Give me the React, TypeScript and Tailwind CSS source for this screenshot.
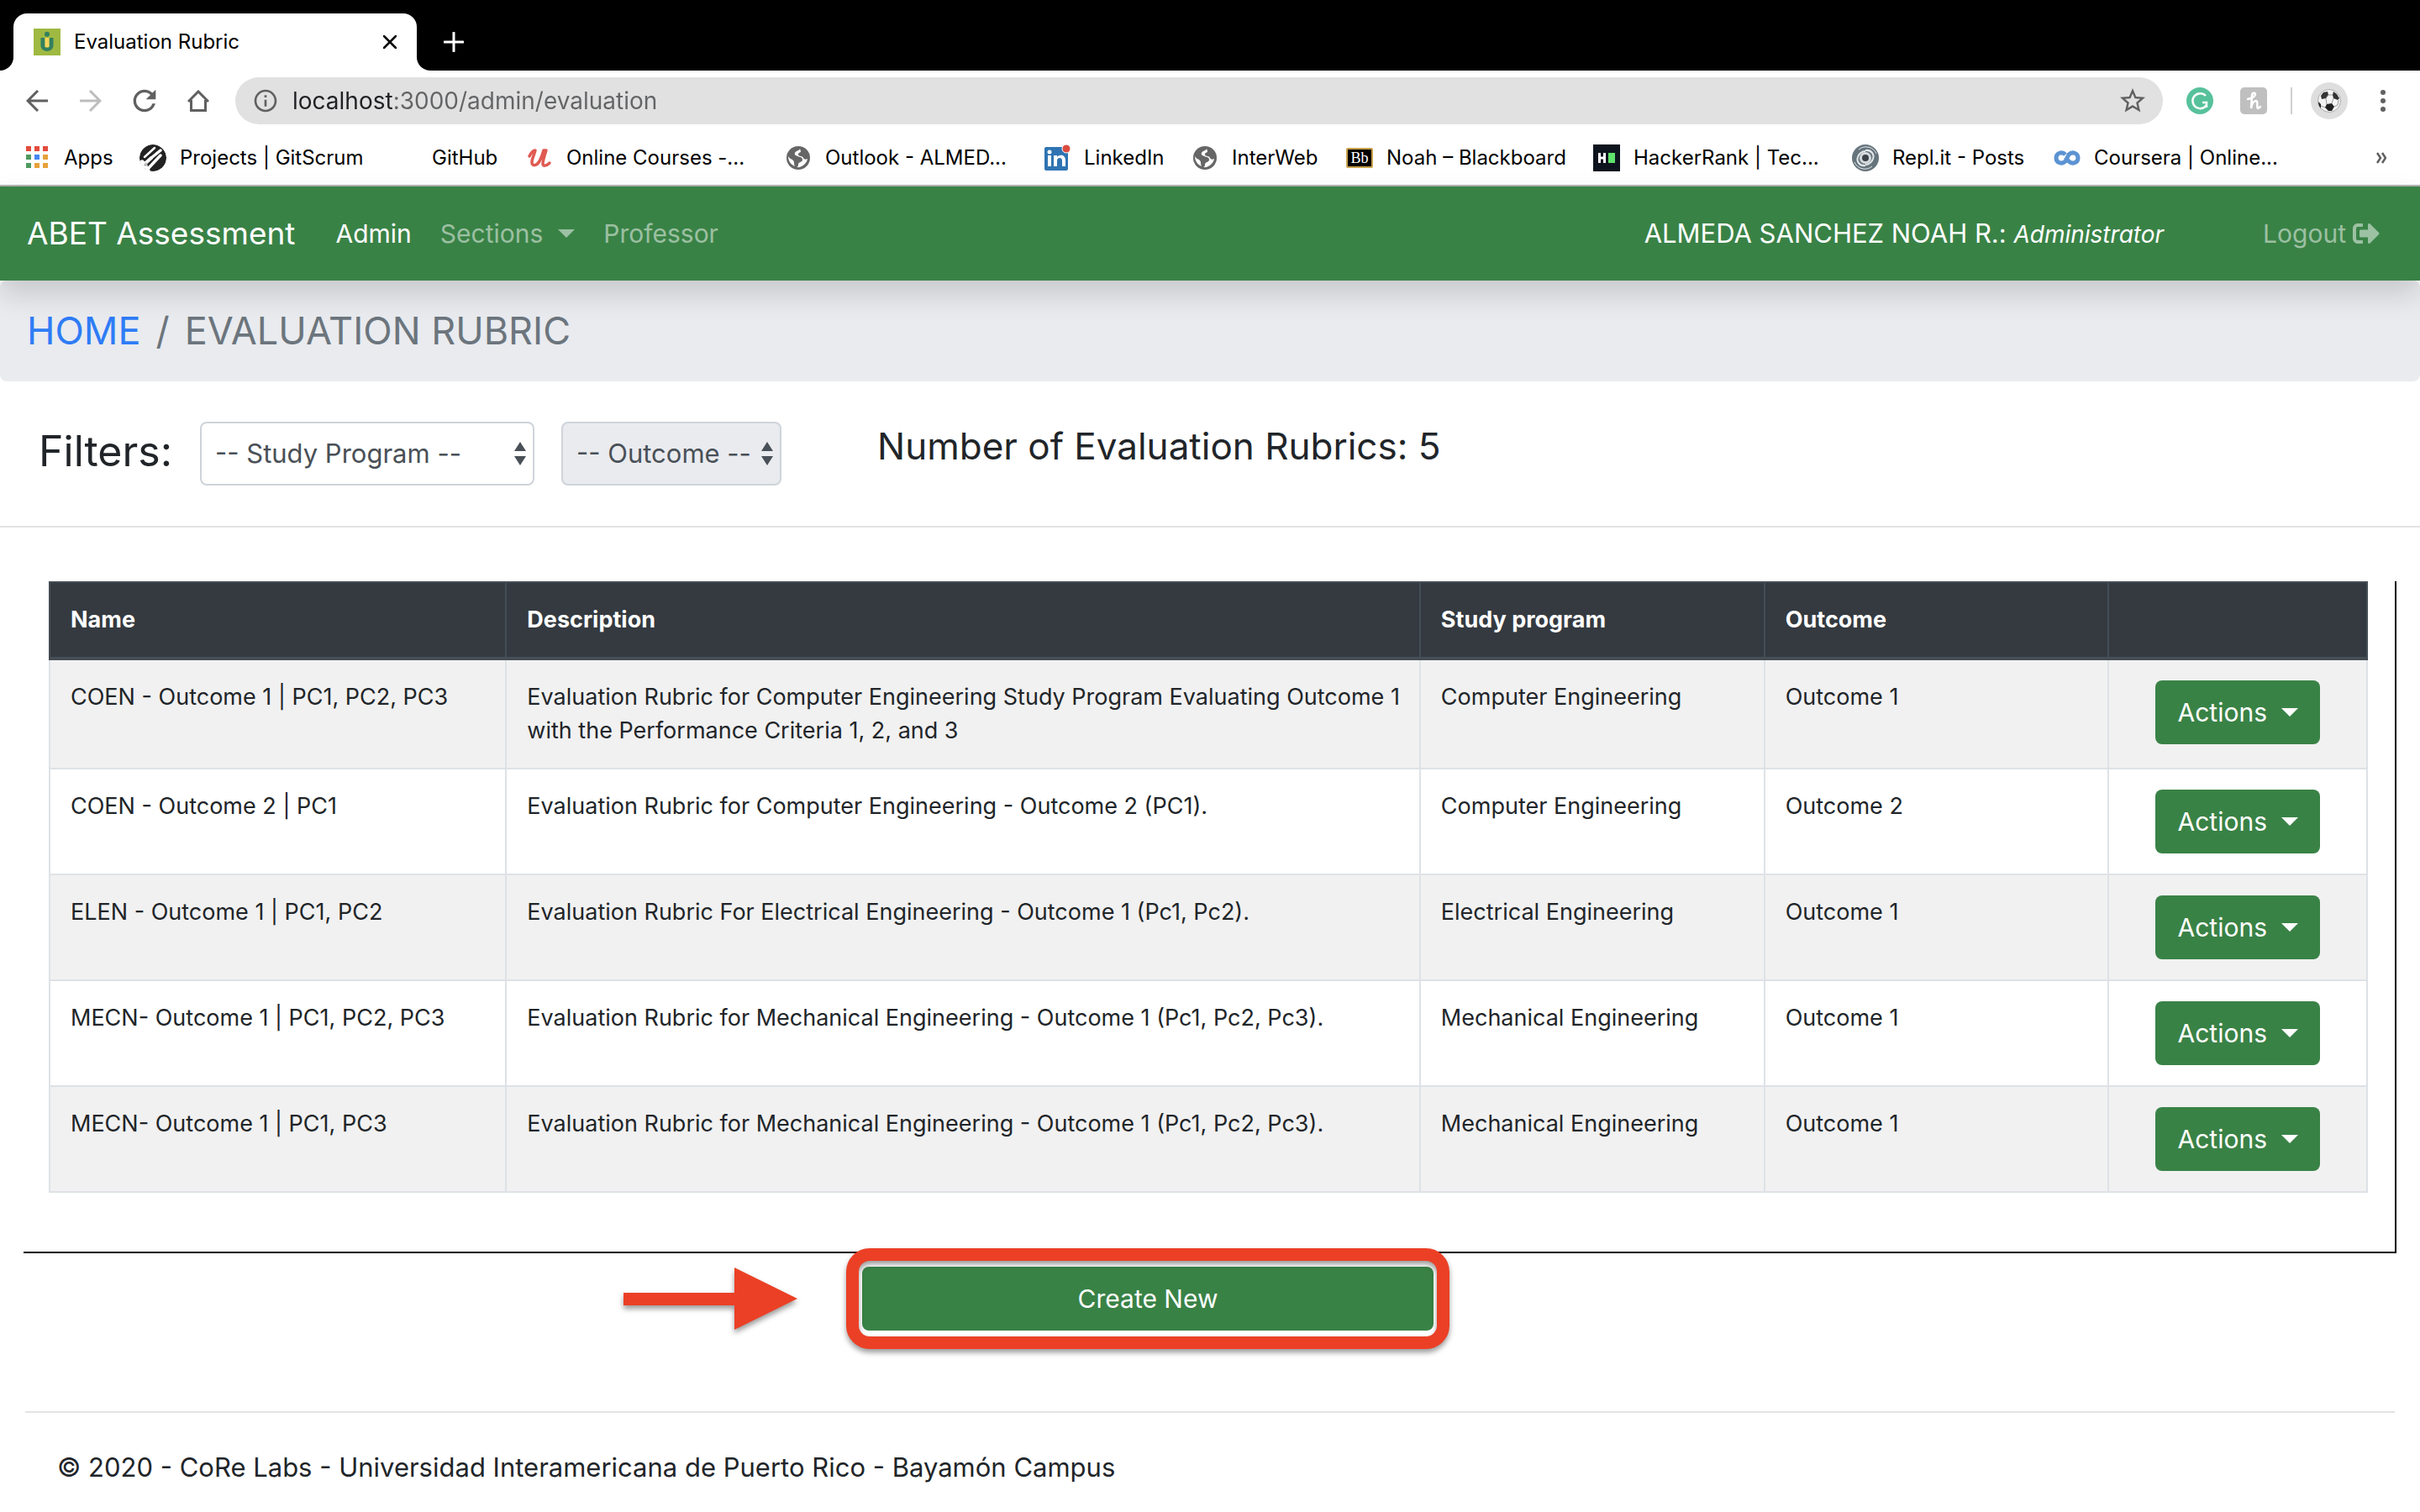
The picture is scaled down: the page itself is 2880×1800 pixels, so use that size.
import type { ReactNode } from "react";
import { FaSignOutAlt } from "react-icons/fa";
import { MdInfoOutline, MdRefresh, MdStarBorder } from "react-icons/md";

type Rubric = { name: string; description: string; program: string; outcome: string };

const rubrics: Rubric[] = [
  {
    name: "COEN - Outcome 1 | PC1, PC2, PC3",
    description:
      "Evaluation Rubric for Computer Engineering Study Program Evaluating Outcome 1 with the Performance Criteria 1, 2, and 3",
    program: "Computer Engineering",
    outcome: "Outcome 1",
  },
  {
    name: "COEN - Outcome 2 | PC1",
    description: "Evaluation Rubric for Computer Engineering - Outcome 2 (PC1).",
    program: "Computer Engineering",
    outcome: "Outcome 2",
  },
  {
    name: "ELEN - Outcome 1 | PC1, PC2",
    description: "Evaluation Rubric For Electrical Engineering - Outcome 1 (Pc1, Pc2).",
    program: "Electrical Engineering",
    outcome: "Outcome 1",
  },
  {
    name: "MECN- Outcome 1 | PC1, PC2, PC3",
    description: "Evaluation Rubric for Mechanical Engineering - Outcome 1 (Pc1, Pc2, Pc3).",
    program: "Mechanical Engineering",
    outcome: "Outcome 1",
  },
  {
    name: "MECN- Outcome 1 | PC1, PC3",
    description: "Evaluation Rubric for Mechanical Engineering - Outcome 1 (Pc1, Pc2, Pc3).",
    program: "Mechanical Engineering",
    outcome: "Outcome 1",
  },
];

function Favicon() {
  return (
    <svg viewBox="0 0 32 32" className="size-8" aria-hidden="true">
      <rect width="32" height="32" fill="#9fb942" />
      <circle cx="16" cy="6.7" r="3" fill="#33805f" />
      <path d="M8.5 11h5v9.500a2.500 2.500 0 0 0 5 0V11h5v9.500a7.500 6.500 0 0 1-15 0z" fill="#33805f" />
      <rect x="13.500" y="11" width="5" height="11" fill="#f5d55c" />
    </svg>
  );
}

function AppsIcon() {
  const colors = ["#e34b3d", "#e34b3d", "#e34b3d", "#4f9a60", "#4286f5", "#e6a23a", "#4f9a60", "#e6a23a", "#e6a23a"];
  return (
    <svg viewBox="0 0 32 32" className="size-8" aria-hidden="true">
      {colors.map((c, i) => (
        <rect key={i} x={3 + (i % 3) * 10} y={2 + Math.floor(i / 3) * 10} width="6" height="6" fill={c} />
      ))}
    </svg>
  );
}

function GitScrumIcon() {
  return (
    <svg viewBox="0 0 32 32" className="size-8" aria-hidden="true">
      <defs>
        <clipPath id="gitscrum-disc">
          <circle cx="16" cy="16" r="16" />
        </clipPath>
      </defs>
      <g clipPath="url(#gitscrum-disc)">
        <circle cx="16" cy="16" r="16" fill="#222" />
        <g stroke="#fff" strokeLinecap="round" strokeLinejoin="round" fill="none">
          <path d="M18 4 6 15" strokeWidth="2.5" />
          <path d="M25 7 14 16M25 13 9 30" strokeWidth="3.500" />
          <path d="M14 16 3 26" strokeWidth="4" />
          <path d="M3 22l6 9" strokeWidth="7" />
        </g>
        <path d="M5 24l3-3 2 4-4 1z" fill="#bbb" />
      </g>
    </svg>
  );
}

function UdemyIcon() {
  return (
    <svg viewBox="0 0 32 32" className="size-8" aria-hidden="true">
      <path
        d="M4 14c2-4 4-7 7-7-1 5-4 10-4 14 0 6 6 4 9-1 2-4 4-9 5-13h3c-2 6-4 12-4 16 0 3 4 3 8-1"
        fill="none"
        stroke="#e05a52"
        strokeWidth="3.500"
        strokeLinecap="round"
        strokeLinejoin="round"
      />
    </svg>
  );
}

function GlobeIcon() {
  return (
    <svg viewBox="0 0 32 32" className="size-8" aria-hidden="true">
      <circle cx="16" cy="16" r="14" fill="#666" />
      <path
        d="M18 5c-1 3-5 2-6 5-1 2 1 3 3 4 3 1 6 1 6 4 0 4-5 2-5 6 0 2-1 3-2 3 6 1 12-4 13-10-2 1-4 1-5-1-1-3-5-1-6-4-1-2 3-2 3-4z"
        fill="#fff"
      />
      <path d="M4 14c2 4 6 3 7 7 0 2 0 3 1 5-5-2-8-7-8-12z" fill="#fff" />
    </svg>
  );
}

function LinkedInIcon() {
  return (
    <svg viewBox="0 0 32 32" className="size-8" aria-hidden="true">
      <rect x="1" y="3" width="28" height="28" rx="2" fill="#2f74b2" />
      <circle cx="7" cy="9" r="2.500" fill="#fff" />
      <path d="M5 13h4v13H5zM12 13h4v2c2-3 10-4 10 4v7h-4v-7c0-4-6-4-6 0v7h-4z" fill="#fff" />
      <circle cx="27" cy="5" r="5" fill="#db4b40" stroke="#fff" strokeWidth="1" />
    </svg>
  );
}

function BlackboardIcon() {
  return (
    <svg viewBox="0 0 32 32" className="size-8" aria-hidden="true">
      <rect x="1" y="5" width="30" height="22" rx="1" fill="#000" stroke="#c9a24c" strokeWidth="2" />
      <text x="16" y="22" textAnchor="middle" className="fill-white font-['Liberation_Serif',serif] text-[18px]">
        Bb
      </text>
    </svg>
  );
}

function HackerRankIcon() {
  return (
    <svg viewBox="0 0 32 32" className="size-8" aria-hidden="true">
      <rect width="32" height="32" fill="#0e141e" />
      <path d="M6 10h3v4.500h3V10h3v12h-3v-4.500H9V22H6z" fill="#fff" />
      <rect x="18" y="10" width="8" height="12" fill="#5fe36b" />
    </svg>
  );
}

function ReplIcon() {
  return (
    <svg viewBox="0 0 32 32" className="size-8" aria-hidden="true">
      <circle cx="16" cy="16" r="16" fill="#66747c" />
      <g fill="none" stroke="#e3e8ea" strokeWidth="2">
        <path d="M16 7c7-1 11 5 9 10-1 4-5 7-9 7" />
        <path d="M16 25c-7 1-11-5-9-10 1-4 5-7 9-7" />
        <path d="M8 6c7-6 18-3 21 5" strokeWidth="1" />
        <path d="M24 26c-7 6-18 3-21-5" strokeWidth="1" />
      </g>
      <circle cx="16" cy="16" r="7" fill="#d5dadd" />
      <circle cx="16" cy="16" r="4" fill="#3a4247" />
    </svg>
  );
}

function CourseraIcon() {
  return (
    <svg viewBox="0 0 32 32" className="size-8" aria-hidden="true">
      <path
        d="M14 12c-4-4-11-2-11 4s7 8 11 4l4-8c4-4 11-2 11 4s-7 8-11 4c-2-2-3-4-4-5"
        fill="none"
        stroke="#5b93d3"
        strokeWidth="5"
      />
    </svg>
  );
}

const bookmarks: { label: string; icon: ReactNode; width: string }[] = [
  { label: "Apps", icon: <AppsIcon />, width: "w-[138px]" },
  { label: "Projects | GitScrum", icon: <GitScrumIcon />, width: "w-[300px]" },
  { label: "GitHub", icon: <span className="size-8" />, width: "w-[160px]" },
  { label: "Online Courses -...", icon: <UdemyIcon />, width: "w-[308px]" },
  { label: "Outlook - ALMED...", icon: <GlobeIcon />, width: "w-[308px]" },
  { label: "LinkedIn", icon: <LinkedInIcon />, width: "w-[176px]" },
  { label: "InterWeb", icon: <GlobeIcon />, width: "w-[184px]" },
  { label: "Noah – Blackboard", icon: <BlackboardIcon />, width: "w-[294px]" },
  { label: "HackerRank | Tec...", icon: <HackerRankIcon />, width: "w-[308px]" },
  { label: "Repl.it - Posts", icon: <ReplIcon />, width: "w-[240px]" },
  { label: "Coursera | Online...", icon: <CourseraIcon />, width: "w-[308px]" },
];

function TabStrip() {
  return (
    <div className="flex h-[84px] items-end bg-black">
      <div className="size-4 bg-white">
        <div className="size-4 rounded-br-2xl bg-black" />
      </div>
      <div className="flex h-[68px] w-[480px] items-center rounded-t-2xl bg-white pr-5 pl-6">
        <Favicon />
        <span className="ml-4 flex-1 text-[24px] leading-8 text-black">Evaluation Rubric</span>
        <button type="button" aria-label="Close tab" className="flex size-6 items-center justify-center">
          <svg viewBox="0 0 16 16" className="size-4" aria-hidden="true">
            <path d="M1 1l14 14M15 1L1 15" stroke="#000" strokeWidth="2.500" strokeLinecap="round" />
          </svg>
        </button>
      </div>
      <div className="size-4 bg-white">
        <div className="size-4 rounded-bl-2xl bg-black" />
      </div>
      <button type="button" aria-label="New tab" className="ml-4 flex h-[68px] items-center">
        <svg viewBox="0 0 24 24" className="size-6" aria-hidden="true">
          <path d="M12 1v22M1 12h22" stroke="#fff" strokeWidth="3" strokeLinecap="round" />
        </svg>
      </button>
    </div>
  );
}

function Toolbar() {
  return (
    <div className="flex h-16 items-center bg-white pt-2 pr-[34px] pl-6">
      <div className="flex gap-6 text-[#606060]">
        <button type="button" aria-label="Back" className="flex size-10 items-center justify-center">
          <svg viewBox="0 0 26 26" className="size-[26px]" fill="none" stroke="currentColor" strokeWidth="3" aria-hidden="true">
            <path d="M26 13H2M14 1L2 13l12 12" />
          </svg>
        </button>
        <button type="button" aria-label="Forward" className="flex size-10 items-center justify-center text-[#bdbdbd]">
          <svg viewBox="0 0 26 26" className="size-[26px]" fill="none" stroke="currentColor" strokeWidth="3" aria-hidden="true">
            <path d="M0 13h24M12 1l12 12-12 12" />
          </svg>
        </button>
        <button type="button" aria-label="Reload" className="flex size-10 items-center justify-center">
          <MdRefresh className="size-10" />
        </button>
        <button type="button" aria-label="Home" className="flex size-10 items-center justify-center">
          <svg viewBox="0 0 26 26" className="size-[26px]" fill="none" stroke="currentColor" strokeWidth="3" aria-hidden="true">
            <path d="M1 14L13 2l12 12M4.500 12v12.500h17V12" />
          </svg>
        </button>
      </div>
      <div className="ml-6 flex h-14 flex-1 items-center rounded-full bg-[#e1e1e1] pr-[18px] pl-5 text-[#606060]">
        <MdInfoOutline className="size-8" />
        <input
          type="text"
          aria-label="Address"
          defaultValue="localhost:3000/admin/evaluation"
          className="ml-4 h-10 min-w-0 flex-1 bg-linear-to-r from-[#202124] from-[121px] to-[#636466] to-[121px] bg-clip-text text-[28px] text-transparent outline-none"
        />
        <button type="button" aria-label="Bookmark this page">
          <MdStarBorder className="size-9" />
        </button>
      </div>
      <button type="button" aria-label="Grammarly" className="ml-7">
        <svg viewBox="0 0 32 32" className="size-8" aria-hidden="true">
          <circle cx="16" cy="16" r="16" fill="#57c19c" />
          <path d="M23 10a9 9 0 1 0 1 11M19 18h5v6" fill="none" stroke="#fff" strokeWidth="2.500" />
        </svg>
      </button>
      <button type="button" aria-label="Honey" className="ml-8">
        <svg viewBox="0 0 32 32" className="size-8" aria-hidden="true">
          <rect width="32" height="32" rx="5" fill="#bfbfbf" />
          <path
            d="M9 14c5-1 9-3 9-6 0-2-4-2-4 2l-1 15c1-6 3-9 6-9 3 1 0 8 2 9 1 0 2-1 3-2"
            fill="none"
            stroke="#fff"
            strokeWidth="2.500"
            strokeLinecap="round"
          />
        </svg>
      </button>
      <div className="ml-7 h-8 w-0.5 bg-[#cfcfcf]" />
      <button type="button" aria-label="Profile" className="ml-[22px] flex size-11 items-center justify-center rounded-full bg-[#dedede]">
        <svg viewBox="0 0 28 28" className="size-7" aria-hidden="true">
          <circle cx="14" cy="14" r="13.500" fill="#f4f4f4" stroke="#aaa" strokeWidth="1" />
          <path d="M11 18l6-1 3 4-3 5h-4l-4-4z" fill="#222" />
          <path d="M4 8l3-4 5-1 1 4-3 4-5 1z" fill="#333" />
          <path d="M19 3l4 3 3 5-2 2-5-2-1-4z" fill="#333" />
          <path d="M1 15l3 3v5c-2-2-3-5-3-8z" fill="#222" />
          <path d="M10 11l1 7M10 11l3-4h5M19 11l-2 6M20 21l4-2 1-6M9 22l-5-2" stroke="#999" fill="none" />
        </svg>
      </button>
      <button type="button" aria-label="Menu" className="ml-8 flex w-5 justify-center">
        <svg viewBox="0 0 6 26" className="h-[26px] w-[6px]" fill="#606060" aria-hidden="true">
          <circle cx="3" cy="3" r="3" />
          <circle cx="3" cy="13" r="3" />
          <circle cx="3" cy="23" r="3" />
        </svg>
      </button>
    </div>
  );
}

function BookmarksBar() {
  return (
    <nav aria-label="Bookmarks" className="flex h-[74px] items-center border-b-2 border-[#b3b3b3] bg-white pt-2 pr-10 pl-7">
      {bookmarks.map((b) => (
        <a key={b.label} href="#" className={`flex shrink-0 items-center gap-4 text-[24px] leading-8 whitespace-nowrap text-black ${b.width}`}>
          {b.icon}
          {b.label}
        </a>
      ))}
      <button type="button" aria-label="More bookmarks" className="ml-auto">
        <svg viewBox="0 0 12 14" className="h-3.5 w-3" fill="none" stroke="#606060" strokeWidth="2.500" aria-hidden="true">
          <path d="M1 1l4 6-4 6M7 1l4 6-4 6" />
        </svg>
      </button>
    </nav>
  );
}

function Caret() {
  return <span className="inline-block border-x-[10px] border-t-[10px] border-x-transparent border-t-current" />;
}

function SiteNav() {
  return (
    <header className="relative flex h-28 items-center bg-[#398246] pr-12 pl-8 text-[30px] leading-10 text-white/50 shadow-[0_16px_32px_rgba(0,0,0,0.15)]">
      <a href="#" className="mr-12 text-[37px] text-white">
        ABET Assessment
      </a>
      <nav aria-label="Main" className="flex items-center gap-[34px]">
        <a href="#" className="text-white">
          Admin
        </a>
        <button type="button" className="flex items-center gap-[18px]">
          Sections
          <Caret />
        </button>
        <a href="#">Professor</a>
      </nav>
      <p className="mr-[118px] ml-auto text-[31px] text-white">
        ALMEDA SANCHEZ NOAH R.: <em className="text-[28px]">Administrator</em>
      </p>
      <a href="#" className="flex items-center gap-2">
        Logout
        <FaSignOutAlt className="size-8" />
      </a>
    </header>
  );
}

function FilterSelect({ label, className, disabled }: { label: string; className: string; disabled?: boolean }) {
  return (
    <div className={`relative ${className}`}>
      <select
        aria-label={label}
        disabled={disabled}
        className="h-[76px] w-full appearance-none rounded-lg border-2 border-[#ced4da] bg-white pl-4 text-[31px] text-[#495057] opacity-100 disabled:bg-[#e9ebef]"
      >
        <option>{`-- ${label} --`}</option>
      </select>
      <svg viewBox="0 0 14 28" className="pointer-events-none absolute top-6 right-2.5 h-7 w-3.5" fill="#495057" aria-hidden="true">
        <path d="M7 0l7 11H0zM7 28l7-11H0z" />
      </svg>
    </div>
  );
}

function RubricTable() {
  const cell = "border-2 border-[#dee2e6] py-6 pr-4 pl-6 align-top";
  const head = "border-2 border-b-4 border-[#454d55] py-6 pr-4 pl-6 text-left font-bold";
  return (
    <table className="w-full table-fixed border-collapse text-[27px] leading-10 text-[#212529]">
      <colgroup>
        <col className="w-[19.700%]" />
        <col />
        <col className="w-[14.860%]" />
        <col className="w-[14.860%]" />
        <col className="w-[11.150%]" />
      </colgroup>
      <thead className="bg-[#343a40] text-white">
        <tr>
          <th className={head}>Name</th>
          <th className={head}>Description</th>
          <th className={head}>Study program</th>
          <th className={head}>Outcome</th>
          <th className={head} aria-label="Actions" />
        </tr>
      </thead>
      <tbody>
        {rubrics.map((r) => (
          <tr key={r.name} className="odd:bg-[#f1f1f1]">
            <td className={cell}>{r.name}</td>
            <td className={cell}>{r.description}</td>
            <td className={cell}>{r.program}</td>
            <td className={cell}>{r.outcome}</td>
            <td className="border-2 border-[#dee2e6] px-6 py-6 align-top">
              <button
                type="button"
                className="mx-auto flex h-[76px] w-[196px] items-center justify-center gap-[17px] rounded-lg bg-[#398246] text-[30px] text-white"
              >
                Actions
                <Caret />
              </button>
            </td>
          </tr>
        ))}
      </tbody>
    </table>
  );
}

function CreateNew() {
  return (
    <div className="flex justify-center pt-4 pr-[148px]">
      <div className="relative">
        <button type="button" className="h-[76px] w-[680px] rounded-lg bg-[#398246] text-[30px] text-white">
          Create New
        </button>
        <div className="pointer-events-none absolute -inset-x-[19px] -inset-y-[22px] rounded-[28px] border-[15px] border-[#eb4026] drop-shadow-[0_4px_3px_rgba(0,0,0,0.4)]" />
        <svg
          viewBox="0 0 208 76"
          className="absolute top-0 right-full mr-[76px] h-[76px] w-[208px] overflow-visible drop-shadow-[0_4px_3px_rgba(0,0,0,0.4)]"
          aria-hidden="true"
        >
          <path d="M0 31h132V1l75 37-75 37V46H0z" fill="#eb4026" />
        </svg>
      </div>
    </div>
  );
}

export default function App() {
  return (
    <div className="min-h-screen bg-white font-['Inter','Liberation_Sans',sans-serif] text-[#212529]">
      <TabStrip />
      <Toolbar />
      <BookmarksBar />
      <SiteNav />
      <nav aria-label="Breadcrumb" className="flex h-[120px] items-center gap-[18px] rounded-lg bg-[#e9ebef] px-8 text-[45px] text-[#6c757d]">
        <a href="#" className="text-[#2f7cf6]">
          HOME
        </a>
        <span>/</span>
        <span>EVALUATION RUBRIC</span>
      </nav>
      <main>
        <section className="flex items-start border-b-2 border-[#e3e3e3] py-12 pl-[46px]">
          <h2 className="w-48 text-[50px] leading-[70px]">Filters:</h2>
          <FilterSelect label="Study Program" className="w-[398px]" />
          <FilterSelect label="Outcome" className="ml-8 w-[262px]" disabled />
          <h3 className="ml-[114px] text-[44px] leading-[58px]">Number of Evaluation Rubrics: 5</h3>
        </section>
        <section className="mx-7 mt-16 border-r-2 border-b-2 border-black pr-8 pb-[70px] pl-[30px]">
          <RubricTable />
        </section>
        <CreateNew />
      </main>
      <footer className="mx-[30px] mt-24 border-t-2 border-[#e3e3e3] pt-10 pl-[38px] text-[31px] leading-[50px]">
        © 2020 - CoRe Labs - Universidad Interamericana de Puerto Rico - Bayamón Campus
      </footer>
    </div>
  );
}
